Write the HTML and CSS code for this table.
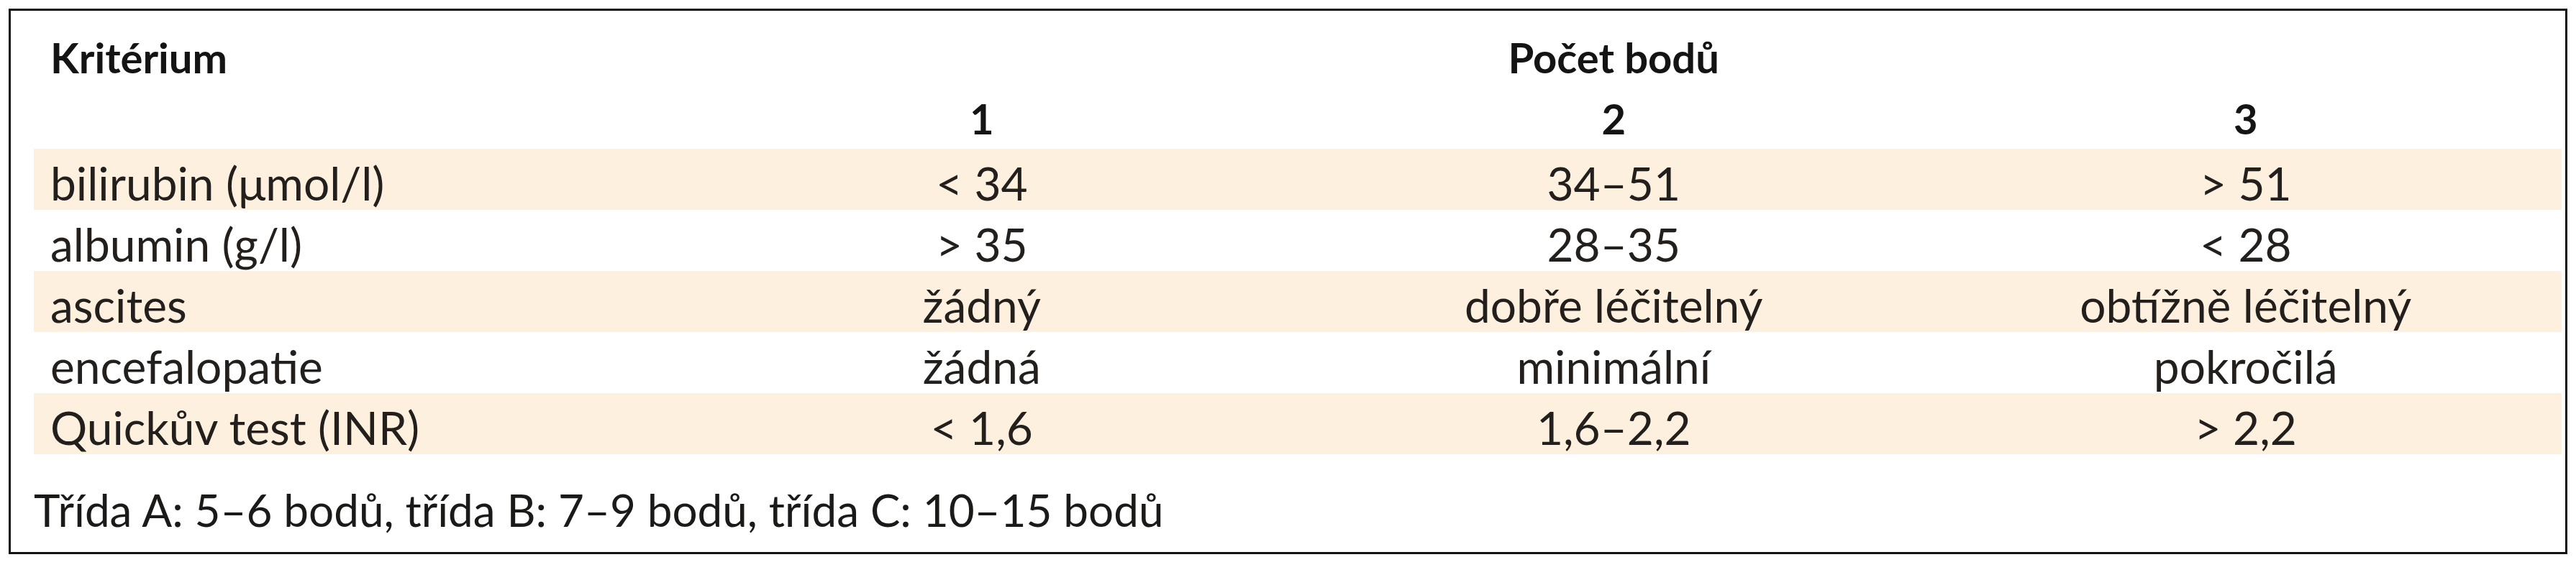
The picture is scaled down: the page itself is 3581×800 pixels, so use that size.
FILE: index.html
```html
<!DOCTYPE html>
<html lang="cs">
<head>
<meta charset="utf-8">
<title>Child-Pugh</title>
<link rel="stylesheet" href="styles.css">
</head>
<body>
<div class="box">
  <table class="score">
    <colgroup><col><col><col><col></colgroup>
    <thead>
      <tr class="head1">
        <th class="crit">Kritérium</th>
        <th colspan="3">Počet bodů</th>
      </tr>
      <tr class="head2">
        <th></th>
        <th>1</th>
        <th>2</th>
        <th>3</th>
      </tr>
    </thead>
    <tbody>
      <tr class="shade"><td>bilirubin (μmol/l)</td><td>&lt; 34</td><td>34–51</td><td>&gt; 51</td></tr>
      <tr><td>albumin (g/l)</td><td>&gt; 35</td><td>28–35</td><td>&lt; 28</td></tr>
      <tr class="shade"><td>ascites</td><td>žádný</td><td>dobře léčitelný</td><td>obtížně léčitelný</td></tr>
      <tr><td>encefalopatie</td><td>žádná</td><td>minimální</td><td>pokročilá</td></tr>
      <tr class="shade"><td>Quickův test (INR)</td><td>&lt; 1,6</td><td>1,6–2,2</td><td>&gt; 2,2</td></tr>
    </tbody>
  </table>
  <p class="note">Třída A: 5–6 bodů, třída B: 7–9 bodů, třída C: 10–15 bodů</p>
</div>
</body>
</html>
```
FILE: styles.css
```css
html, body {
  margin: 0;
  padding: 0;
  background: #ffffff;
}
body {
  font-family: Lato, "Liberation Sans", Arial, sans-serif;
  color: #231f1c;
}
.box {
  box-sizing: border-box;
  margin: 12px 0 0 12px;
  width: 3557px;
  height: 759px;
  border: 3px solid #111111;
  padding: 22px 5px 0 32px;
}
.score {
  width: 100%;
  border-collapse: collapse;
  table-layout: fixed;
}
.score th, .score td {
  padding: 0;
  text-align: center;
  white-space: nowrap;
}
.score th {
  font-weight: bold;
  font-size: 58px;
  color: #141414;
  height: 85px;
  line-height: 85px;
  vertical-align: top;
}
.score th.crit {
  text-align: left;
  padding-left: 23px;
}
.score td {
  font-size: 64px;
  height: 85px;
  box-sizing: border-box;
  padding-top: 14px;
  line-height: 67px;
  vertical-align: top;
}
.score td:first-child {
  text-align: left;
  padding-left: 23px;
}
.score tr.shade td {
  background: #fdf0df;
}
.note {
  margin: 44px 0 0 0;
  font-size: 62px;
  line-height: 67px;
  color: #1c1a18;
  white-space: nowrap;
}
```
